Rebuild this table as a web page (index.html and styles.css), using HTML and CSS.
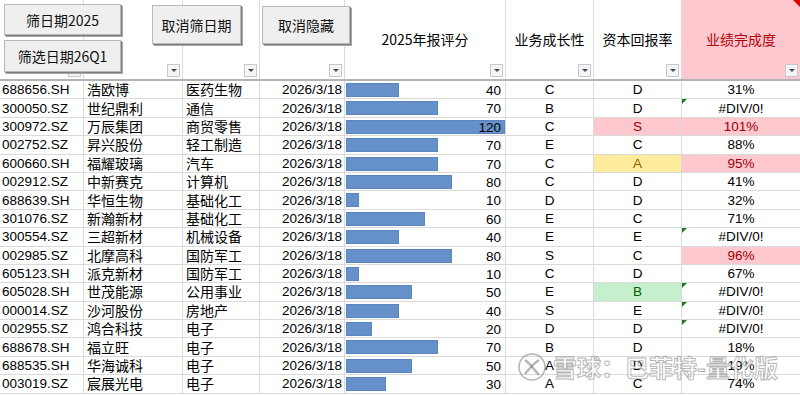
FILE: index.html
```html
<!DOCTYPE html>
<html lang="zh">
<head>
<meta charset="utf-8">
<link rel="stylesheet" href="styles.css">
</head>
<body>
<div class="sheet">
  <div class="head">
    <div class="hc"><span class="dd"></span></div>
    <div class="hc"><span class="dd"></span></div>
    <div class="hc"><span class="dd"></span></div>
    <div class="hc"><span class="dd"></span></div>
    <div class="hc"><span class="ht">2025年报评分</span><span class="dd"></span></div>
    <div class="hc"><span class="ht">业务成长性</span><span class="dd"></span></div>
    <div class="hc"><span class="ht">资本回报率</span><span class="dd"></span></div>
    <div class="hc pinkh"><span class="ht">业绩完成度</span><span class="dd"></span><span class="redtri"></span></div>
  </div>
  <div class="body">
    <div class="row"><div class="c code">688656.SH</div><div class="c nm">浩欧博</div><div class="c nm">医药生物</div><div class="c dt">2026/3/18</div><div class="c score"><span class="bar" style="width:53px"></span><span class="num">40</span></div><div class="c g">C</div><div class="c g">D</div><div class="c pc">31%</div></div>
    <div class="row"><div class="c code">300050.SZ</div><div class="c nm">世纪鼎利</div><div class="c nm">通信</div><div class="c dt">2026/3/18</div><div class="c score"><span class="bar" style="width:92px"></span><span class="num">70</span></div><div class="c g">B</div><div class="c g">D</div><div class="c pc err">#DIV/0!</div></div>
    <div class="row"><div class="c code">300972.SZ</div><div class="c nm">万辰集团</div><div class="c nm">商贸零售</div><div class="c dt">2026/3/18</div><div class="c score"><span class="bar" style="width:159px"></span><span class="num">120</span></div><div class="c g">C</div><div class="c g bad">S</div><div class="c pc bad">101%</div></div>
    <div class="row"><div class="c code">002752.SZ</div><div class="c nm">昇兴股份</div><div class="c nm">轻工制造</div><div class="c dt">2026/3/18</div><div class="c score"><span class="bar" style="width:92px"></span><span class="num">70</span></div><div class="c g">E</div><div class="c g">C</div><div class="c pc">88%</div></div>
    <div class="row"><div class="c code">600660.SH</div><div class="c nm">福耀玻璃</div><div class="c nm">汽车</div><div class="c dt">2026/3/18</div><div class="c score"><span class="bar" style="width:92px"></span><span class="num">70</span></div><div class="c g">C</div><div class="c g neu">A</div><div class="c pc bad">95%</div></div>
    <div class="row"><div class="c code">002912.SZ</div><div class="c nm">中新赛克</div><div class="c nm">计算机</div><div class="c dt">2026/3/18</div><div class="c score"><span class="bar" style="width:106px"></span><span class="num">80</span></div><div class="c g">C</div><div class="c g">D</div><div class="c pc">41%</div></div>
    <div class="row"><div class="c code">688639.SH</div><div class="c nm">华恒生物</div><div class="c nm">基础化工</div><div class="c dt">2026/3/18</div><div class="c score"><span class="bar" style="width:13px"></span><span class="num">10</span></div><div class="c g">D</div><div class="c g">D</div><div class="c pc">32%</div></div>
    <div class="row"><div class="c code">301076.SZ</div><div class="c nm">新瀚新材</div><div class="c nm">基础化工</div><div class="c dt">2026/3/18</div><div class="c score"><span class="bar" style="width:79px"></span><span class="num">60</span></div><div class="c g">E</div><div class="c g">C</div><div class="c pc">71%</div></div>
    <div class="row"><div class="c code">300554.SZ</div><div class="c nm">三超新材</div><div class="c nm">机械设备</div><div class="c dt">2026/3/18</div><div class="c score"><span class="bar" style="width:53px"></span><span class="num">40</span></div><div class="c g">E</div><div class="c g">E</div><div class="c pc err">#DIV/0!</div></div>
    <div class="row"><div class="c code">002985.SZ</div><div class="c nm">北摩高科</div><div class="c nm">国防军工</div><div class="c dt">2026/3/18</div><div class="c score"><span class="bar" style="width:106px"></span><span class="num">80</span></div><div class="c g">S</div><div class="c g">C</div><div class="c pc bad">96%</div></div>
    <div class="row"><div class="c code">605123.SH</div><div class="c nm">派克新材</div><div class="c nm">国防军工</div><div class="c dt">2026/3/18</div><div class="c score"><span class="bar" style="width:13px"></span><span class="num">10</span></div><div class="c g">C</div><div class="c g">D</div><div class="c pc">67%</div></div>
    <div class="row"><div class="c code">605028.SH</div><div class="c nm">世茂能源</div><div class="c nm">公用事业</div><div class="c dt">2026/3/18</div><div class="c score"><span class="bar" style="width:66px"></span><span class="num">50</span></div><div class="c g">E</div><div class="c g good">B</div><div class="c pc err">#DIV/0!</div></div>
    <div class="row"><div class="c code">000014.SZ</div><div class="c nm">沙河股份</div><div class="c nm">房地产</div><div class="c dt">2026/3/18</div><div class="c score"><span class="bar" style="width:53px"></span><span class="num">40</span></div><div class="c g">S</div><div class="c g">E</div><div class="c pc err">#DIV/0!</div></div>
    <div class="row"><div class="c code">002955.SZ</div><div class="c nm">鸿合科技</div><div class="c nm">电子</div><div class="c dt">2026/3/18</div><div class="c score"><span class="bar" style="width:26px"></span><span class="num">20</span></div><div class="c g">D</div><div class="c g">D</div><div class="c pc err">#DIV/0!</div></div>
    <div class="row"><div class="c code">688678.SH</div><div class="c nm">福立旺</div><div class="c nm">电子</div><div class="c dt">2026/3/18</div><div class="c score"><span class="bar" style="width:92px"></span><span class="num">70</span></div><div class="c g">B</div><div class="c g">D</div><div class="c pc">18%</div></div>
    <div class="row"><div class="c code">688535.SH</div><div class="c nm">华海诚科</div><div class="c nm">电子</div><div class="c dt">2026/3/18</div><div class="c score"><span class="bar" style="width:66px"></span><span class="num">50</span></div><div class="c g">A</div><div class="c g">D</div><div class="c pc">19%</div></div>
    <div class="row"><div class="c code">003019.SZ</div><div class="c nm">宸展光电</div><div class="c nm">电子</div><div class="c dt">2026/3/18</div><div class="c score"><span class="bar" style="width:40px"></span><span class="num">30</span></div><div class="c g">A</div><div class="c g">C</div><div class="c pc">74%</div></div>
  </div>

  <div class="btn b1">筛日期2025</div>
  <div class="btn b2">筛选日期26Q1</div>
  <div class="btn b3">取消筛日期</div>
  <div class="btn b4">取消隐藏</div>

  <div class="wm">
    <svg class="wm-logo" width="30" height="30" viewBox="0 0 30 30">
      <circle cx="15" cy="15" r="13" fill="none" stroke="rgba(120,120,120,0.55)" stroke-width="1.6"/>
      <path d="M8 8 C14 12 17 18 22 23" fill="none" stroke="rgba(120,120,120,0.55)" stroke-width="2.4"/>
      <path d="M22 8 C17 11 12 17 8 22" fill="none" stroke="rgba(120,120,120,0.55)" stroke-width="2.4"/>
    </svg>
    <span class="wm-text">雪球：巴菲特-量化版</span>
  </div>
</div>
</body>
</html>
```

FILE: styles.css
```css
* { box-sizing: border-box; }
html, body { margin: 0; padding: 0; background: #fff; }
body {
  font-family: "Liberation Sans", Arial, "Noto Sans CJK SC", sans-serif;
  color: #000;
}
.sheet {
  position: relative;
  width: 800px;
  height: 396px;
  overflow: hidden;
}
.head, .row {
  display: grid;
  grid-template-columns: 84px 99px 77px 85px 161px 88px 88px 118px;
}
.head {
  height: 81px;
  border-bottom: 2px solid #b3b3b3;
}
.hc {
  position: relative;
  border-right: 1px solid #dadada;
  display: flex;
  align-items: center;
  justify-content: center;
  padding-bottom: 2px;
}
.ht {
  font-family: "Noto Sans CJK SC", sans-serif;
  font-size: 14px;
  line-height: 18px;
}
.pinkh { background: #ffc7ce; border-right: none; }
.pinkh .ht { color: #b0000b; }
.dd {
  position: absolute;
  right: 2px;
  bottom: 2px;
  width: 13px;
  height: 13px;
  border: 1px solid #c4c8cf;
  background: #f4f5f7;
}
.dd::after {
  content: "";
  position: absolute;
  left: 3px;
  top: 4px;
  border-left: 3px solid transparent;
  border-right: 3px solid transparent;
  border-top: 3px solid #4a4a4a;
}
.redtri {
  position: absolute;
  right: 0;
  top: 0;
  border-left: 7px solid transparent;
  border-top: 7px solid #e00000;
}
.row { height: 18.4px; }
.c {
  border-right: 1px solid #dadada;
  border-bottom: 1px solid #dadada;
  font-size: 13.5px;
  line-height: 17px;
  white-space: nowrap;
  position: relative;
  display: flex;
  align-items: center;
}
.c:last-child { border-right: none; }
.code { padding-left: 2px; }
.nm {
  font-family: "Noto Sans CJK SC", sans-serif;
  font-size: 14px;
  padding-left: 3px;
}
.dt { justify-content: flex-end; padding-right: 2px; }
.score {
  display: grid;
  align-items: start;
  padding: 2px 0 0 1px;
}
.bar {
  grid-area: 1 / 1;
  justify-self: start;
  height: 14px;
  background: #6590c8;
  border: 1px solid #5a85c0;
}
.num {
  grid-area: 1 / 1;
  justify-self: end;
  padding-right: 4px;
  line-height: 15px;
  position: relative;
}
.g, .pc { justify-content: center; }
.bad { background: #ffc7ce; color: #9c0006; }
.neu { background: #ffeb9c; color: #9c5700; }
.good { background: #c6efce; color: #006100; }
.err::before {
  content: "";
  position: absolute;
  left: 0;
  top: 0;
  border-top: 5px solid #1e7a1e;
  border-right: 5px solid transparent;
}

.btn {
  position: absolute;
  display: flex;
  align-items: center;
  justify-content: center;
  background: #efefef;
  border: 1px solid #b9b9b9;
  box-shadow: 1px 1px 0 #7d7d7d, 2px 2px 0 #a8a8a8;
  font-family: "Noto Sans CJK SC", sans-serif;
  font-size: 14px;
  color: #111;
}
.b1 { left: 4px; top: 4px; width: 117px; height: 31px; }
.b2 { left: 4px; top: 40px; width: 117px; height: 32px; }
.b3 { left: 152px; top: 5px; width: 89px; height: 39px; }
.b4 { left: 262px; top: 6px; width: 88px; height: 38px; }

.wm {
  position: absolute;
  left: 517px;
  top: 352px;
  display: flex;
  align-items: center;
  gap: 6px;
  pointer-events: none;
}
.wm-text {
  font-family: "Noto Sans CJK SC", sans-serif;
  font-weight: 700;
  font-size: 24px;
  line-height: 30px;
  color: rgba(255, 255, 255, 0.72);
  -webkit-text-stroke: 1px rgba(110, 110, 110, 0.5);
}
```
